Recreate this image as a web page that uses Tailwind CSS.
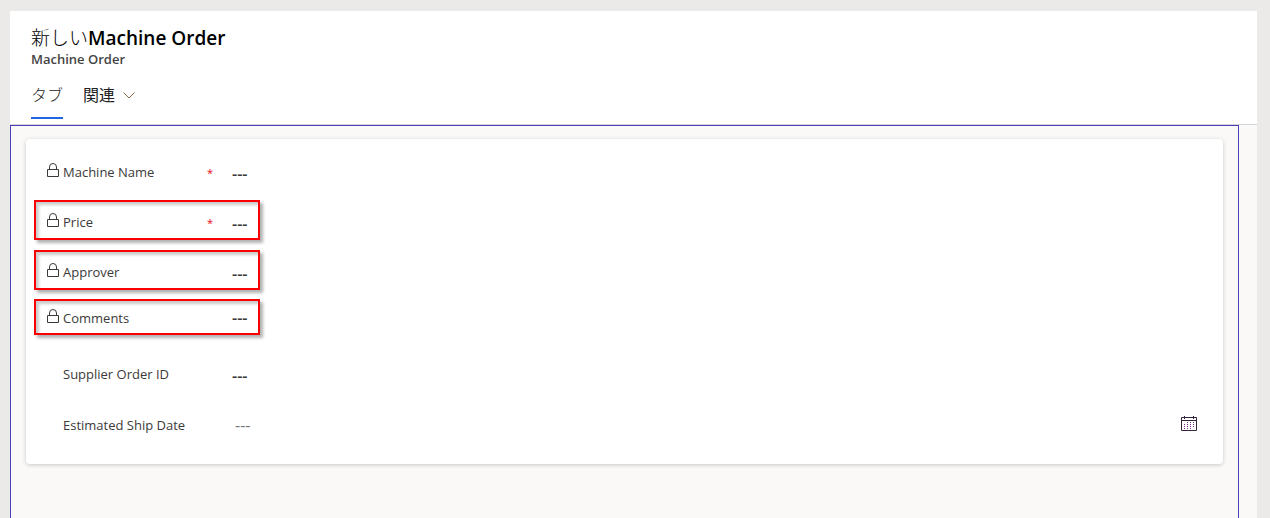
<!DOCTYPE html>
<html lang="ja">

<head>
    <meta charset="UTF-8">
    <meta name="viewport" content="width=device-width, initial-scale=1.0">
    <title>新しい Machine Order</title>
    <script src="https://cdn.jsdelivr.net/npm/@tailwindcss/browser@4"></script>
</head>

<body class="flex h-screen flex-col overflow-hidden bg-[#ebeae8] pt-[11px] pr-[13px] pl-[10px] font-['Open_Sans','Noto_Sans_CJK_JP',sans-serif] text-[#3b3a39]">
    <!-- Shared icons -->
    <svg class="hidden">
        <symbol id="lock" viewBox="0 0 12 15">
            <path d="M.5 6.5h11v7H.5zM2.5 6.5V4a3.5 3.5 0 0 1 7 0v2.5" fill="none" stroke="currentColor" />
        </symbol>
    </svg>

    <!-- Header -->
    <header class="border-b border-[#d6d5d5] bg-white px-[21px] pt-[14px] pb-[5px]">
        <h1 class="text-[19px] leading-[26px] font-semibold text-black"><span class="font-light">新しい</span>Machine Order</h1>
        <p class="text-[13px] leading-4 font-semibold text-[#444]">Machine Order</p>
        <nav class="mt-4 flex gap-5 text-base leading-6 text-[#222]">
            <a href="#" class="h-9 border-b-2 border-[#2266e3] font-light">タブ</a>
            <button type="button" class="flex h-6 items-center gap-2">
                関連
                <svg class="h-[7px] w-3" viewBox="0 0 12 7" fill="none" stroke="#8a6840">
                    <path d="M.5.5 6 6 11.5.5" />
                </svg>
            </button>
        </nav>
    </header>

    <!-- Form -->
    <main class="flex-1 bg-[#faf9f8] pr-[18px]">
        <div class="h-full border border-b-0 border-[#4a40b8] px-[15px] pt-[13px]">
            <form class="rounded bg-white pt-[11px] pr-[26px] pb-[21px] pl-2 text-[13px] shadow-[0_1px_4px_rgba(0,0,0,0.2)]">
                <div class="flex h-10 w-[226px] items-center border-2 border-transparent pt-1 pl-[11px]">
                    <svg class="mr-1 mb-1 h-[15px] w-3"><use href="#lock" /></svg>
                    <label for="name" class="w-36 pt-0.5">Machine Name</label>
                    <span class="w-[25px] pt-0.5 text-[11px] text-red-600">*</span>
                    <input id="name" value="---" readonly class="w-6 pt-1 text-base font-semibold outline-none">
                </div>
                <div class="mt-[10px] flex h-10 w-[226px] items-center border-2 border-[#fa0000] pt-1 pl-[11px] shadow-[3px_3px_3px_rgba(0,0,0,0.3),inset_3px_3px_3px_rgba(0,0,0,0.2)]">
                    <svg class="mr-1 mb-1 h-[15px] w-3"><use href="#lock" /></svg>
                    <label for="price" class="w-36 pt-0.5">Price</label>
                    <span class="w-[25px] pt-0.5 text-[11px] text-red-600">*</span>
                    <input id="price" value="---" readonly class="w-6 pt-1 text-base font-semibold outline-none">
                </div>
                <div class="mt-[10px] flex h-10 w-[226px] items-center border-2 border-[#fa0000] pt-1 pl-[11px] shadow-[3px_3px_3px_rgba(0,0,0,0.3),inset_3px_3px_3px_rgba(0,0,0,0.2)]">
                    <svg class="mr-1 mb-1 h-[15px] w-3"><use href="#lock" /></svg>
                    <label for="approver" class="w-[169px] pt-0.5">Approver</label>
                    <input id="approver" value="---" readonly class="w-6 pt-1 text-base font-semibold outline-none">
                </div>
                <div class="mt-[9px] flex h-9 w-[226px] items-center border-2 border-[#fa0000] pt-0.5 pl-[11px] shadow-[3px_3px_3px_rgba(0,0,0,0.3),inset_3px_3px_3px_rgba(0,0,0,0.2)]">
                    <svg class="mr-1 mb-1 h-[15px] w-3"><use href="#lock" /></svg>
                    <label for="comments" class="w-[169px] pt-0.5">Comments</label>
                    <input id="comments" value="---" readonly class="w-6 text-base font-semibold outline-none">
                </div>
                <div class="mt-[17px] flex h-10 items-center pt-1 pl-[29px]">
                    <label for="supplier" class="w-[169px] pt-0.5">Supplier Order ID</label>
                    <input id="supplier" value="---" class="flex-1 pt-1 text-base font-semibold outline-none">
                </div>
                <div class="mt-[11px] flex h-10 items-center pt-1 pl-[29px]">
                    <label for="ship" class="w-[172px] pt-0.5">Estimated Ship Date</label>
                    <input id="ship" placeholder="---" class="flex-1 text-base placeholder:text-[#777] outline-none">
                    <button type="button" aria-label="日付の選択" class="pb-1">
                        <svg class="h-[15px] w-4" viewBox="0 0 16 15" fill="none" stroke="#33263c">
                            <path d="M.5 1.5h15v13H.5zM.5 4.5h15M3.5 0v3M12.5 0v3" />
                            <path d="M6 6.5h8M3 8.5h11M3 10.5h11M3 12.5h8" stroke="#7a2a8c" stroke-dasharray="1 2" />
                        </svg>
                    </button>
                </div>
            </form>
        </div>
    </main>
</body>

</html>
